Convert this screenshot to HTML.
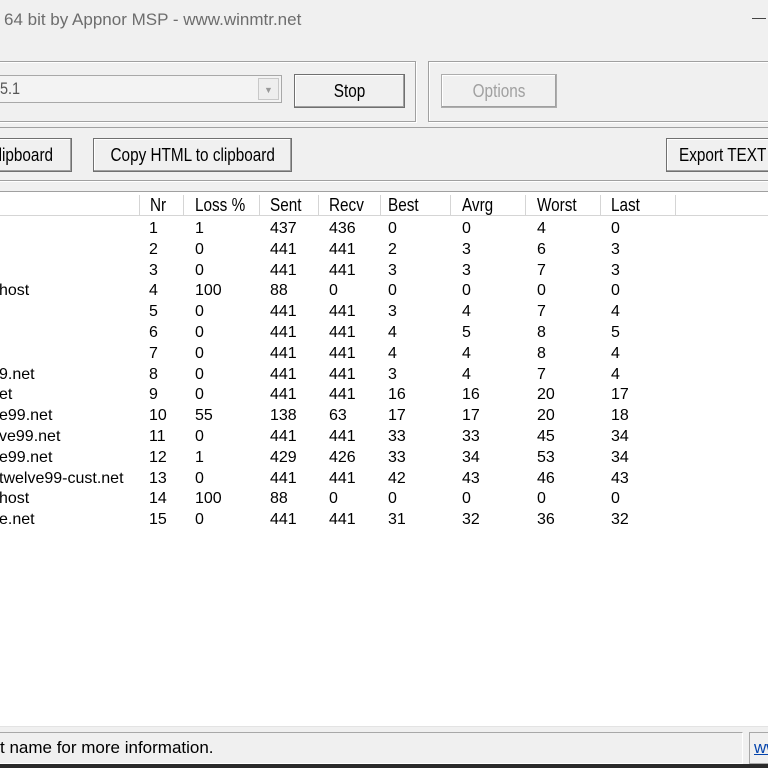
<!DOCTYPE html>
<html><head><style>
*{margin:0;padding:0;box-sizing:border-box}
body{width:768px;height:768px;overflow:hidden;background:#f0f0f0;position:relative;font-family:"Liberation Sans",sans-serif;color:#000}
.a{position:absolute;white-space:nowrap}
.grp{position:absolute;border:1px solid #a0a0a0;box-shadow:inset 1px 1px 0 #fff,1px 1px 0 #fff}
.btn{position:absolute;border:1px solid #707070;background:#f0f0f0;box-shadow:inset -1px -1px 0 #a0a0a0,inset 1px 1px 0 #fff;font-size:18px;display:flex;align-items:center;justify-content:center;white-space:nowrap}
.btn span,.nar{display:inline-block;transform:scaleX(.85)}
.row{position:absolute;left:0;width:768px;font-size:16px;height:21px;line-height:21px;white-space:nowrap}
.row span{position:absolute;white-space:nowrap}
</style></head><body>
<div class="a" style="left:4px;top:10px;font-size:17px;color:#6d6d6d">64 bit by Appnor MSP - www.winmtr.net</div>
<div class="a" style="left:752px;top:18px;width:14px;height:1px;background:#444"></div>

<div class="grp" style="left:-5px;top:61px;width:421px;height:61px"></div>
<div class="grp" style="left:428px;top:61px;width:350px;height:61px"></div>
<div class="a" style="left:-3px;top:75px;width:285px;height:28px;border:1px solid #a8a8a8;background:#f3f3f3"></div>
<div class="a" style="left:0px;top:79px;font-size:17px;color:#555"><span class="nar" style="transform-origin:left">5.1</span></div>
<div class="a" style="left:258px;top:78px;width:21px;height:22px;border:1px solid #c8c8c8;background:#eee;color:#999;font-size:9px;text-align:center;line-height:22px">▼</div>
<div class="btn" style="left:294px;top:74px;width:111px;height:34px"><span>Stop</span></div>
<div class="btn" style="left:441px;top:74px;width:116px;height:34px;color:#a0a0a0;border-color:#adadad"><span>Options</span></div>

<div class="a" style="left:0;top:127px;width:768px;height:1px;background:#a0a0a0"></div>
<div class="btn" style="left:-30px;top:138px;width:102px;height:34px;justify-content:flex-end;padding-right:18px"><span style="transform-origin:right">lipboard</span></div>
<div class="btn" style="left:93px;top:138px;width:199px;height:34px"><span>Copy HTML to clipboard</span></div>
<div class="btn" style="left:666px;top:138px;width:112px;height:34px;justify-content:flex-start;padding-left:12px"><span style="transform-origin:left">Export TEXT</span></div>
<div class="a" style="left:0;top:180px;width:768px;height:1px;background:#a0a0a0"></div>
<div class="a" style="left:0;top:181px;width:768px;height:1px;background:#fff"></div>

<div class="a" style="left:0;top:191px;width:768px;height:535px;background:#fff;border-top:1px solid #a0a0a0"></div>
<div class="a" style="left:0;top:193px;width:768px;height:23px;background:#fff;border-bottom:1px solid #d5d5d5;font-size:18px">
<div class="a" style="left:139px;top:2px;width:1px;height:20px;background:#d5d5d5"></div>
<div class="a" style="left:183px;top:2px;width:1px;height:20px;background:#d5d5d5"></div>
<div class="a" style="left:259px;top:2px;width:1px;height:20px;background:#d5d5d5"></div>
<div class="a" style="left:318px;top:2px;width:1px;height:20px;background:#d5d5d5"></div>
<div class="a" style="left:380px;top:2px;width:1px;height:20px;background:#d5d5d5"></div>
<div class="a" style="left:450px;top:2px;width:1px;height:20px;background:#d5d5d5"></div>
<div class="a" style="left:525px;top:2px;width:1px;height:20px;background:#d5d5d5"></div>
<div class="a" style="left:600px;top:2px;width:1px;height:20px;background:#d5d5d5"></div>
<div class="a" style="left:675px;top:2px;width:1px;height:20px;background:#d5d5d5"></div>
<span class="a nar" style="left:150px;top:2px;transform-origin:left">Nr</span>
<span class="a nar" style="left:195px;top:2px;transform-origin:left">Loss %</span>
<span class="a nar" style="left:270px;top:2px;transform-origin:left">Sent</span>
<span class="a nar" style="left:329px;top:2px;transform-origin:left">Recv</span>
<span class="a nar" style="left:388px;top:2px;transform-origin:left">Best</span>
<span class="a nar" style="left:462px;top:2px;transform-origin:left">Avrg</span>
<span class="a nar" style="left:537px;top:2px;transform-origin:left">Worst</span>
<span class="a nar" style="left:611px;top:2px;transform-origin:left">Last</span>
</div>

<div id="rows"></div>
<script>
var d=[["",1,1,437,436,0,0,4,0],["",2,0,441,441,2,3,6,3],["",3,0,441,441,3,3,7,3],["host",4,100,88,0,0,0,0,0],["",5,0,441,441,3,4,7,4],["",6,0,441,441,4,5,8,5],["",7,0,441,441,4,4,8,4],["9.net",8,0,441,441,3,4,7,4],["et",9,0,441,441,16,16,20,17],["e99.net",10,55,138,63,17,17,20,18],["ve99.net",11,0,441,441,33,33,45,34],["e99.net",12,1,429,426,33,34,53,34],["twelve99-cust.net",13,0,441,441,42,43,46,43],["host",14,100,88,0,0,0,0,0],["e.net",15,0,441,441,31,32,36,32]];
var x=[-1,149,195,270,329,388,462,537,611],h="";
d.forEach(function(r,i){h+='<div class="row" style="top:'+(218+i*20.8)+'px">';r.forEach(function(v,j){h+='<span style="left:'+x[j]+'px">'+v+'</span>'});h+='</div>'});
document.getElementById('rows').innerHTML=h;
</script>

<div class="a" style="left:0;top:726px;width:768px;height:1px;background:#e3e3e3"></div>
<div class="a" style="left:-2px;top:732px;width:745px;height:32px;border:1px solid #a8a8a8;border-right-color:#fff;border-bottom-color:#fff"></div>
<div class="a" style="left:0;top:738px;font-size:17px">t name for more information.</div>
<div class="a" style="left:749px;top:732px;width:25px;height:32px;border:1px solid #a8a8a8"></div>
<div class="a" style="left:754px;top:738px;font-size:17px;color:#0645ad;text-decoration:underline">ww</div>
<div class="a" style="left:0;top:764px;width:768px;height:4px;background:#2a2a2a"></div>
</body></html>
